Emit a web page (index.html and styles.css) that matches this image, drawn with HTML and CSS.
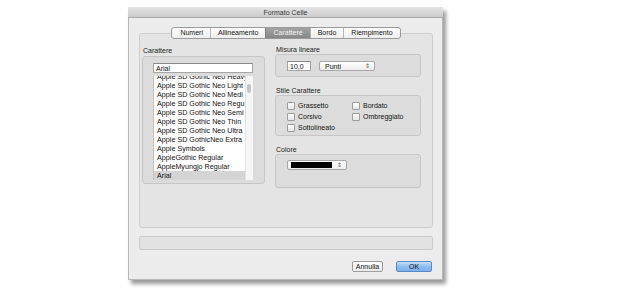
FILE: index.html
```html
<!DOCTYPE html>
<html lang="it">
<head>
    <meta charset="UTF-8">
    <title>Formato Celle</title>
    <link rel="stylesheet" href="styles.css">
</head>
<body>
    <div class="dialog">
        <div class="titlebar">Formato Celle</div>
        <div class="dialog-body">
            <div class="tabview">
                <div class="tabs">
                    <span class="tab">Numeri</span>
                    <span class="tab">Allineamento</span>
                    <span class="tab active">Carattere</span>
                    <span class="tab">Bordo</span>
                    <span class="tab">Riempimento</span>
                </div>
                <div class="pane">
                    <div class="col col-left">
                        <div class="group-label label-font">Carattere</div>
                        <div class="group font-group">
                            <div class="field search">Arial</div>
                            <div class="list">
                                <div class="list-rows">
                                    <div class="row">Apple SD Gothic Neo Heavy</div>
                                    <div class="row">Apple SD Gothic Neo Light</div>
                                    <div class="row">Apple SD Gothic Neo Medi</div>
                                    <div class="row">Apple SD Gothic Neo Regu</div>
                                    <div class="row">Apple SD Gothic Neo Semi</div>
                                    <div class="row">Apple SD Gothic Neo Thin</div>
                                    <div class="row">Apple SD Gothic Neo Ultra</div>
                                    <div class="row">Apple SD GothicNeo Extra</div>
                                    <div class="row">Apple Symbols</div>
                                    <div class="row">AppleGothic Regular</div>
                                    <div class="row">AppleMyungjo Regular</div>
                                    <div class="row selected">Arial</div>
                                </div>
                                <div class="scrollbar"><span class="thumb"></span></div>
                            </div>
                        </div>
                    </div>
                    <div class="col col-right">
                        <div class="group-label">Misura lineare</div>
                        <div class="group size-group">
                            <div class="field size">10,0</div>
                            <div class="popup units">Punti<span class="arrows">&#8661;</span></div>
                        </div>

                        <div class="group-label spaced">Stile Carattere</div>
                        <div class="group style-group">
                            <label class="check"><span class="box"></span>Grassetto</label>
                            <label class="check"><span class="box"></span>Bordato</label>
                            <label class="check"><span class="box"></span>Corsivo</label>
                            <label class="check"><span class="box"></span>Ombreggiato</label>
                            <label class="check"><span class="box"></span>Sottolineato</label>
                        </div>

                        <div class="group-label spaced">Colore</div>
                        <div class="group color-group">
                            <div class="popup color"><span class="swatch"></span><span class="arrows">&#8661;</span></div>
                        </div>
                    </div>
                </div>
            </div>

            <div class="status"></div>

            <div class="buttons">
                <button class="btn">Annulla</button>
                <button class="btn default">OK</button>
            </div>
        </div>
    </div>
</body>
</html>
```

FILE: styles.css
```css
:root {
    --dialog-bg: #ececec;
    --pane-bg: #e4e4e4;
    --group-bg: #dcdcdc;
    --border: #c6c6c6;
    --text: #111;
}

body {
    margin: 0;
    width: 624px;
    height: 296px;
    background: white;
    font-family: "Liberation Sans", Arial, sans-serif;
    font-size: 7px;
    color: var(--text);
    overflow: hidden;
}

.dialog {
    margin: 7px 0 0 128px;
    width: 315px;
    height: 273px;
    box-sizing: border-box;
    background: var(--dialog-bg);
    border: 1px solid #b8b8b8;
    border-top: none;
    box-shadow: 3px 4px 4px rgba(0, 0, 0, 0.4);
}

.titlebar {
    height: 11px;
    line-height: 11px;
    box-sizing: border-box;
    text-align: center;
    color: #3a3a3a;
    background: linear-gradient(#e4e4e4, #cbcbcb);
    border-bottom: 1px solid #a9a9a9;
    margin: 0 -1px;
}

.dialog-body {
    padding: 9px 9px 0 10px;
}

/* tabs */
.tabview {
    display: flex;
    flex-direction: column;
    align-items: center;
}

.tabs {
    position: relative;
    z-index: 1;
    display: flex;
    height: 10px;
    border: 1px solid #9a9a9a;
    border-radius: 3px;
    background: linear-gradient(#ffffff, #eeeeee);
    overflow: hidden;
}

.tab {
    line-height: 10px;
    padding: 0 7px;
    border-left: 1px solid #b5b5b5;
}

.tab:first-child {
    border-left: none;
    padding-left: 8px;
}

.tab.active {
    color: #f4f4f4;
    background: linear-gradient(#a3a3a3, #878787);
    border-left-color: #7d7d7d;
}

.pane {
    align-self: stretch;
    margin-top: -6px;
    height: 195px;
    box-sizing: border-box;
    padding: 11px 11px 0 2px;
    background: var(--pane-bg);
    border: 1px solid #cdcdcd;
    border-radius: 3px;
    display: flex;
    gap: 10px;
}

.col-left {
    width: 123px;
}

.col-right {
    width: 146px;
}

.group-label {
    line-height: 9px;
    padding-left: 1px;
    color: #222;
}

.label-font {
    line-height: 11px;
}

.group-label.spaced {
    margin-top: 9px;
}

.group {
    box-sizing: border-box;
    background: var(--group-bg);
    border: 1px solid var(--border);
    border-radius: 3px;
}

/* font list */
.font-group {
    height: 128px;
    padding: 6px 11px 0 10px;
}

.field {
    box-sizing: border-box;
    height: 10px;
    line-height: 9px;
    padding-left: 2px;
    background: white;
    border: 1px solid #a5a5a5;
    border-top-color: #8a8a8a;
}

.list {
    position: relative;
    margin-top: 3px;
    height: 104px;
    background: white;
    border-left: 1px solid #c2c2c2;
    overflow: hidden;
}

.list-rows {
    margin-top: -4px;
    margin-right: 7px;
}

.row {
    height: 9px;
    line-height: 9px;
    padding-left: 3px;
    font-size: 7.2px;
    white-space: nowrap;
    overflow: hidden;
}

.row.selected {
    background: #d4d4d4;
}

.scrollbar {
    position: absolute;
    top: 0;
    right: 0;
    bottom: 0;
    width: 7px;
    background: #f6f6f6;
    border-left: 1px solid #e2e2e2;
}

.thumb {
    position: absolute;
    top: 8px;
    left: 1px;
    width: 4px;
    height: 9px;
    border-radius: 2px;
    background: #c4c4c4;
}

/* right column */
.size-group {
    height: 23px;
    padding: 6px 0 0 11px;
    display: flex;
    gap: 8px;
}

.field.size {
    width: 24px;
}

.popup {
    position: relative;
    box-sizing: border-box;
    height: 10px;
    line-height: 9px;
    border: 1px solid #a8a8a8;
    border-radius: 2px;
    background: linear-gradient(#ffffff, #ededed);
}

.units {
    width: 56px;
    padding-left: 5px;
}

.arrows {
    position: absolute;
    right: 4px;
    top: 0;
    font-size: 6px;
    line-height: 8px;
    color: #555;
}

.style-group {
    height: 41px;
    padding: 4px 0 0 11px;
    display: grid;
    grid-template-columns: 65px auto;
    grid-auto-rows: 11px;
}

.check {
    display: flex;
    align-items: center;
    gap: 3px;
}

.box {
    width: 6px;
    height: 6px;
    border: 1px solid #9c9c9c;
    border-radius: 1px;
    background: linear-gradient(#ffffff, #e6e6e6);
}

.color-group {
    height: 34px;
    padding: 5px 0 0 11px;
}

.popup.color {
    width: 60px;
    padding: 1px 0 0 3px;
}

.swatch {
    display: block;
    width: 41px;
    height: 6px;
    background: #000;
}

/* bottom */
.status {
    margin-top: 8px;
    height: 14px;
    box-sizing: border-box;
    background: #e2e2e2;
    border: 1px solid #cbcbcb;
    border-radius: 2px;
}

.buttons {
    margin-top: 11px;
    padding-right: 1px;
    display: flex;
    justify-content: flex-end;
    gap: 13px;
}

.btn {
    height: 11px;
    padding: 0;
    font-family: inherit;
    font-size: 7px;
    line-height: 9px;
    color: #111;
    border: 1px solid #9d9d9d;
    border-radius: 2px;
    background: linear-gradient(#ffffff, #ececec);
    width: 31px;
}

.btn.default {
    width: 36px;
    border-color: #5a88c4;
    background: linear-gradient(#c7e0fa, #8dbdf0 50%, #7ab1ec);
}
```
